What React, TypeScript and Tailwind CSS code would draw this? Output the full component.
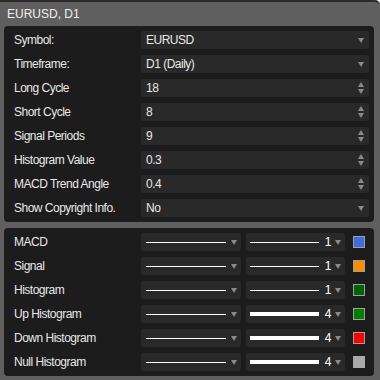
const font = { fontFamily: '"Liberation Sans", Arial, sans-serif' };

type Param = { label: string; value: string; kind: "select" | "spin" };

const params: Param[] = [
  { label: "Symbol:", value: "EURUSD", kind: "select" },
  { label: "Timeframe:", value: "D1 (Daily)", kind: "select" },
  { label: "Long Cycle", value: "18", kind: "spin" },
  { label: "Short Cycle", value: "8", kind: "spin" },
  { label: "Signal Periods", value: "9", kind: "spin" },
  { label: "Histogram Value", value: "0.3", kind: "spin" },
  { label: "MACD Trend Angle", value: "0.4", kind: "spin" },
  { label: "Show Copyright Info.", value: "No", kind: "select" },
];

const styles = [
  { label: "MACD", width: 1, color: "bg-[#4169e1]", border: true },
  { label: "Signal", width: 1, color: "bg-[#ff8c00]", border: true },
  { label: "Histogram", width: 1, color: "bg-[#006400]", border: true },
  { label: "Up Histogram", width: 4, color: "bg-[#008000]", border: true },
  { label: "Down Histogram", width: 4, color: "bg-[#ff0000]", border: true },
  { label: "Null Histogram", width: 4, color: "bg-[#a9a9a9]", border: false },
];

const Down = () => (
  <svg width="6" height="5" viewBox="0 0 6 5" className="shrink-0">
    <path d="M0 0H6L3 5Z" fill="#8a8a8a" />
  </svg>
);

const Spin = () => (
  <div className="flex flex-col gap-[2px] shrink-0">
    <svg width="6" height="5" viewBox="0 0 6 5">
      <path d="M0 5H6L3 0Z" fill="#8a8a8a" />
    </svg>
    <svg width="6" height="5" viewBox="0 0 6 5">
      <path d="M0 0H6L3 5Z" fill="#8a8a8a" />
    </svg>
  </div>
);

export default function App() {
  return (
    <div
      className="w-[380px] h-[380px] bg-[#5f5f5f] border-t-2 border-[#2b2b2b] rounded-tr-[5px] flex flex-col text-[12px] text-[#e8e8e8] overflow-hidden"
      style={font}
    >
      <div className="h-[24px] px-[7px] flex items-center text-[#f0f0f0]">EURUSD, D1</div>

      <div className="ml-[4px] mr-[6px] bg-[#1c1c1c] rounded-[4px] py-[5px] pl-[10px] pr-[5px] flex flex-col gap-[6px] tracking-[-0.5px]">
        {params.map((p) => (
          <div key={p.label} className="flex items-center h-[18px]">
            <div className="w-[127px]">{p.label}</div>
            <div className="flex-1 h-[18px] bg-[#292929] rounded-[3px] flex items-center pl-[5px] pr-[5px]">
              <span className="flex-1">{p.value}</span>
              {p.kind === "select" ? <Down /> : <Spin />}
            </div>
          </div>
        ))}
      </div>

      <div className="ml-[4px] mr-[6px] mt-[6px] bg-[#1c1c1c] rounded-[4px] py-[5px] pl-[10px] pr-[9px] flex flex-col gap-[6px] tracking-[-0.5px]">
        {styles.map((s) => (
          <div key={s.label} className="flex items-center h-[18px]">
            <div className="w-[127px]">{s.label}</div>
            <div className="w-[100px] h-[18px] bg-[#292929] rounded-[3px] flex items-center pl-[5px] pr-[4px] gap-[5px]">
              <div className="flex-1 h-px bg-white" />
              <Down />
            </div>
            <div className="ml-[5px] w-[99px] h-[18px] bg-[#292929] rounded-[3px] flex items-center pl-[4px] pr-[4px]">
              <div className={`flex-1 bg-white ${s.width === 4 ? "h-[4px]" : "h-px"}`} />
              <span className="ml-[6px] mr-[4px] text-white">{s.width}</span>
              <Down />
            </div>
            <div className={`ml-[8px] w-[12px] h-[12px] ${s.color} ${s.border ? "border border-[#a0a0a0]" : ""}`} />
          </div>
        ))}
      </div>
    </div>
  );
}
